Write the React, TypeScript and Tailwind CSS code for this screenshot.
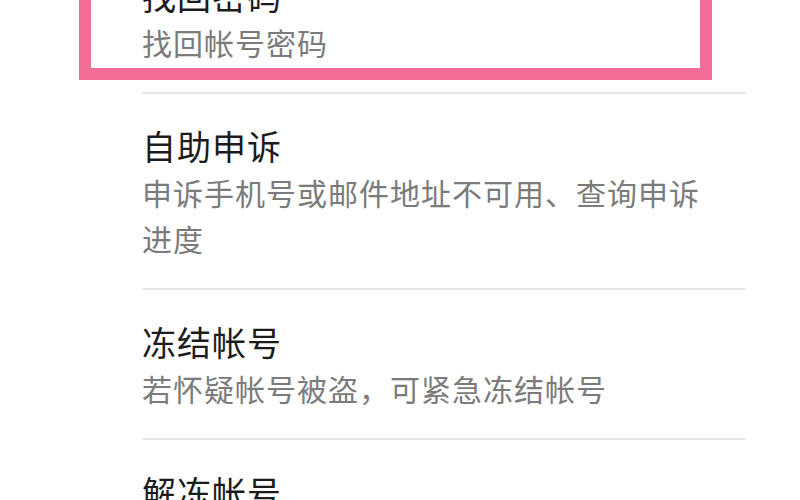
const items = [
  { title: "找回密码", desc: "找回帐号密码" },
  { title: "自助申诉", desc: "申诉手机号或邮件地址不可用、查询申诉进度" },
  { title: "冻结帐号", desc: "若怀疑帐号被盗，可紧急冻结帐号" },
  { title: "解冻帐号", desc: "帐号冻结后，可在此解冻帐号" },
];

export default function App() {
  return (
    <div
      className="relative h-[500px] w-[800px] overflow-hidden bg-white"
      style={{ fontFamily: '"Noto Sans CJK SC", "Noto Sans", sans-serif' }}
    >
      <ul className="ml-[142px] mt-[-56px] w-[604px]">
        {items.map((item) => (
          <li key={item.title} className="border-b-2 border-[#e8e8e8] pt-[29px] pb-[27px]">
            <p className="text-[34px] leading-[46px] tracking-[1px] text-[#1c1c1c]">{item.title}</p>
            <p className="max-w-[565px] text-[30px] leading-[46px] tracking-[1px] text-[#7b7b7b]">
              {item.desc}
            </p>
          </li>
        ))}
      </ul>

      {/* 高亮框 */}
      <div className="absolute left-[79px] top-[-30px] h-[110px] w-[633px] border-[12px] border-[#f26d95]" />
    </div>
  );
}
